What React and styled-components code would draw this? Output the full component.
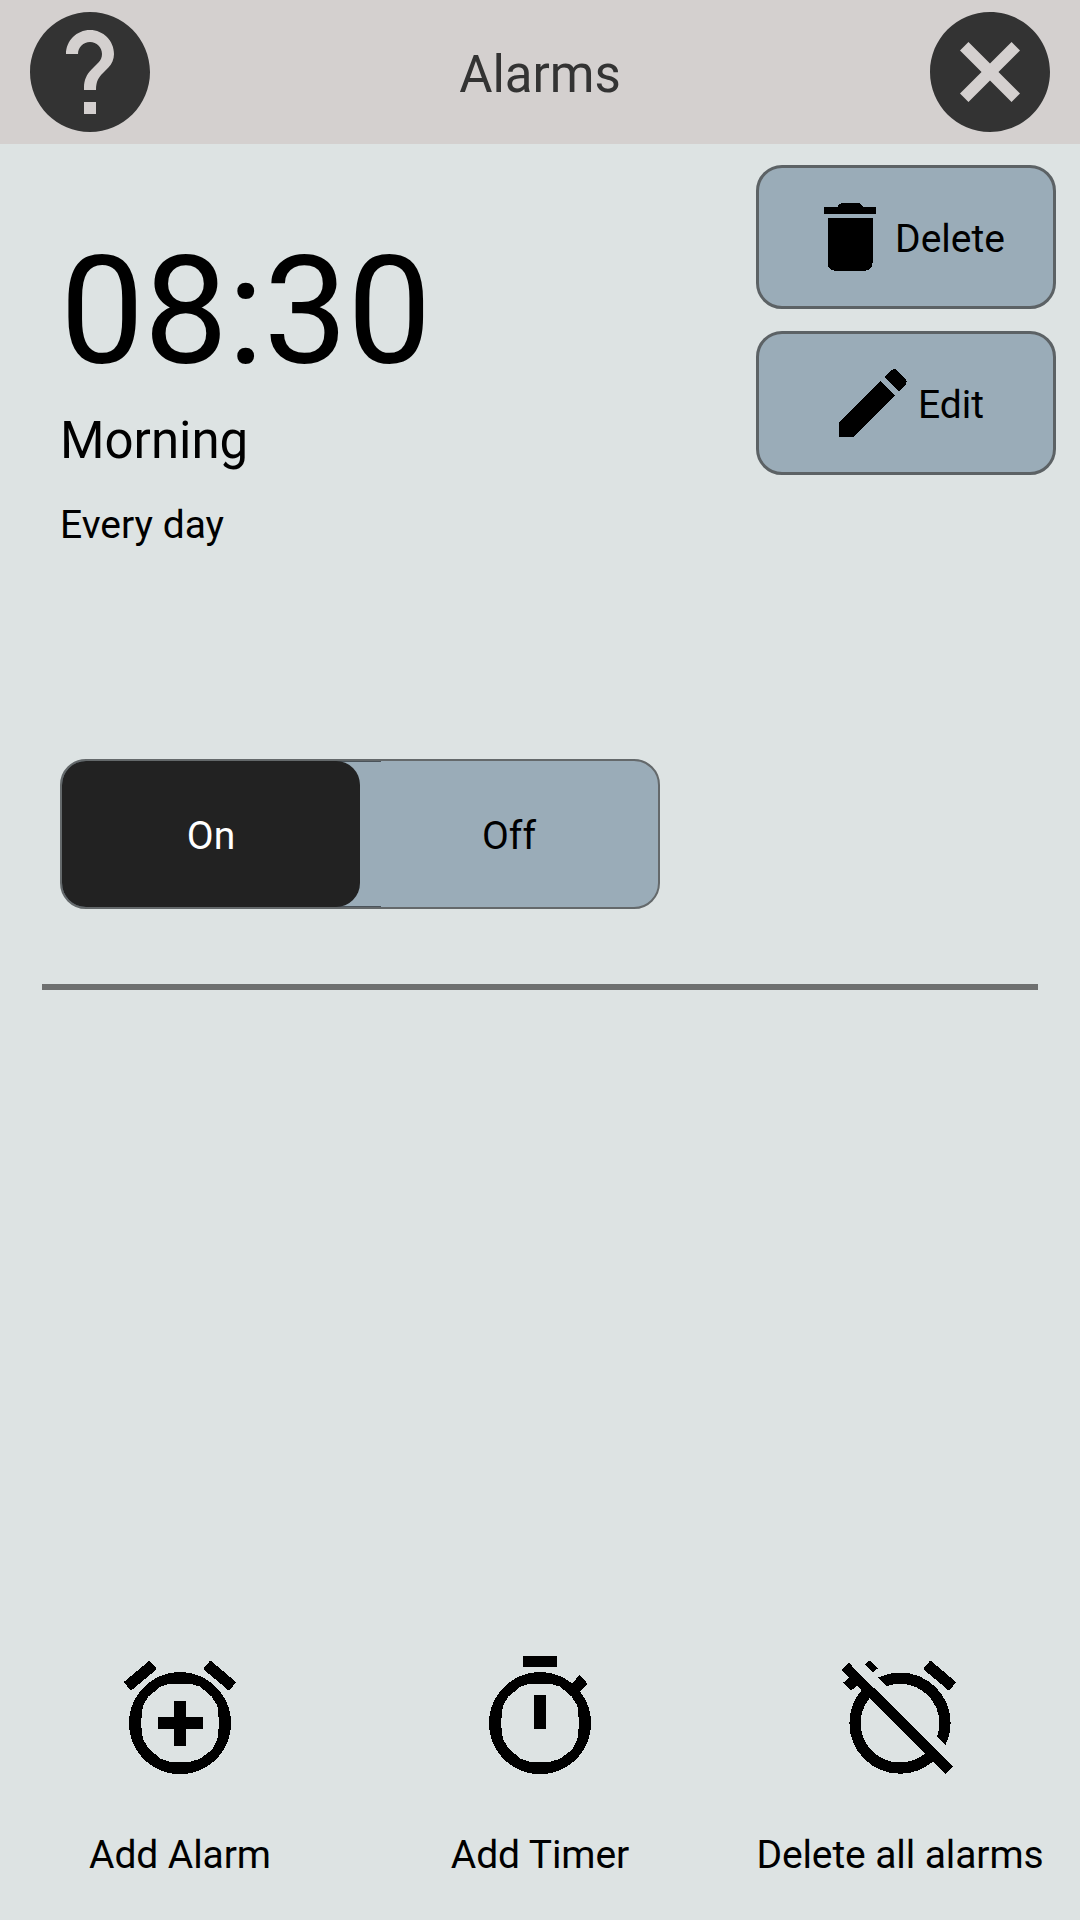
import React from "react";
import styled, { createGlobalStyle } from "styled-components";

const GlobalStyle = createGlobalStyle`
  *, *::before, *::after { box-sizing: border-box; }
  body {
    margin: 0;
    background: #dde3e3;
    font-family: Roboto, "Liberation Sans", sans-serif;
  }
  button {
    margin: 0;
    padding: 0;
    border: 0;
    background: none;
    font: inherit;
    color: inherit;
  }
`;

const Screen = styled.div`
  display: flex;
  flex-direction: column;
  width: 1080px;
  height: 1920px;
  background: #dde3e3;
  color: #000;
  overflow: hidden;
`;

const Header = styled.header`
  display: flex;
  align-items: center;
  justify-content: space-between;
  height: 144px;
  padding: 0 18px;
  background: #d4d0cf;
  color: #333;
`;

const IconButton = styled.button`
  display: flex;
  width: 144px;
  height: 144px;
`;

const Glyph = styled.svg`
  display: block;
  flex: none;
  width: ${(p) => p.$size}px;
  height: ${(p) => p.$size}px;
  fill: currentColor;
  shape-rendering: ${(p) => (p.$crisp ? "crispEdges" : "auto")};
`;

/* Text line with the tall ascent padding used across the app. */
const Line = styled.span`
  display: block;
  margin: 0;
  padding: calc(0.129em + 1px) 0 calc(0.027em - 1px);
  font-size: ${(p) => p.$size}px;
  font-weight: 400;
  line-height: 1.172;
  white-space: nowrap;
`;

const Title = styled(Line)`
  padding: 0.129em 0 0.027em;
`;

const Time = styled(Line)`
  letter-spacing: -0.5px;
`;

const Name = styled(Line)`
  margin-top: -1px;
`;

const Repeat = styled(Line)`
  margin-top: 26px;
`;

const AlarmCard = styled.section`
  display: flex;
  justify-content: space-between;
  height: 615px;
  padding: 0 24px 0 60px;
`;

const Details = styled.div`
  display: flex;
  flex-direction: column;
  align-items: flex-start;
  padding-top: 61px;
`;

const Actions = styled.div`
  display: flex;
  flex-direction: column;
  gap: 22px;
  padding-top: 21px;
`;

const ActionButton = styled.button`
  display: flex;
  align-items: center;
  justify-content: center;
  width: 300px;
  height: 144px;
  padding-right: ${(p) => p.$inset || 0}px;
  border: 3px solid #5c6265;
  border-radius: 26px;
  background: #9aacb8;
`;

const Toggle = styled.div`
  position: relative;
  display: flex;
  width: 600px;
  height: 150px;
  margin-left: 60px;
  border: 2px solid #64696b;
  border-radius: 26px;
  background: #9aacb8;

  &::before {
    content: "";
    position: absolute;
    top: 0;
    left: 270px;
    width: 49px;
    height: 100%;
    border: solid #4a535a;
    border-width: 1px 0;
  }
`;

const ToggleOption = styled.button`
  position: relative;
  display: flex;
  flex: 1;
  align-items: center;
  justify-content: center;
  border-radius: 24px;
  background: ${(p) => (p.$active ? "#222" : "transparent")};
  color: ${(p) => (p.$active ? "#fff" : "#000")};
`;

const Divider = styled.hr`
  width: 996px;
  height: 6px;
  margin: 75px 42px 0;
  border: 0;
  background: #6e7070;
`;

const Footer = styled.nav`
  display: grid;
  grid-template-columns: repeat(3, 360px);
  height: 270px;
  margin-top: auto;
`;

const FooterButton = styled.button`
  display: flex;
  flex-direction: column;
  align-items: center;
  justify-content: flex-start;
  gap: 42px;
  letter-spacing: -0.1px;

  ${Glyph} {
    margin-right: 1px;
  }
`;

const RING =
  "M12 3.93a9.07 9.07 0 1 0 0 18.14a9.07 9.07 0 1 0 0-18.14z" +
  "M10.2 6L13.8 6 15.55 6.5 17.6 8.25 18.65 9.9 18.95 13 18.65 15.9 17.7 17.7 15.55 19.35 13.8 19.85 10.2 19.85 8.55 19.35 6.4 17.5 5.4 15.8 5.05 13 5.4 9.9 6.4 8.25 8.55 6.5z";

const PATHS = {
  help: "M12 2C6.48 2 2 6.48 2 12s4.48 10 10 10 10-4.48 10-10S17.52 2 12 2zm1 17h-2v-2h2v2zm2.07-7.75l-.9.92C13.45 12.9 13 13.5 13 15h-2v-.5c0-1.1.45-2.1 1.17-2.83l1.24-1.26c.37-.36.59-.86.59-1.41 0-1.1-.9-2-2-2s-2 .9-2 2H8c0-2.21 1.79-4 4-4s4 1.79 4 4c0 .88-.36 1.68-.93 2.25z",
  close: "M12 2C6.47 2 2 6.47 2 12s4.47 10 10 10 10-4.47 10-10S17.53 2 12 2zm5 13.59L15.59 17 12 13.41 8.41 17 7 15.59 10.59 12 7 8.41 8.41 7 12 10.59 15.59 7 17 8.41 13.41 12 17 15.59z",
  trash: "M6 19c0 1.1.9 2 2 2h8c1.1 0 2-.9 2-2V7H6v12zM18.8 4h-3.3c-.3-.6-.6-1-1.1-1H9.7c-.6 0-.9.4-1.1 1H5v1.9h13.8V4z",
  pencil: "M3 17.25V21h3.75L17.81 9.94l-3.75-3.75L3 17.25zM20.71 7.04c.39-.39.39-1.02 0-1.41l-2.34-2.34c-.39-.39-1.02-.39-1.41 0l-1.83 1.83 3.75 3.75 1.83-1.83z",
  addAlarm: `M7.88 3.39L6.6 1.86 2 5.71l1.29 1.53 4.59-3.85zM22 5.72l-4.6-3.86-1.29 1.53 4.6 3.86L22 5.72z${RING}M13.1 9h-2.1v2.95H8.1v2.1h2.9v2.95h2.1v-2.95h3v-2.1h-3V9z`,
  timer: `M15.05 1H9v2h6.05V1zM11 14h2.1V7.95H11V14zM19.03 4.5L17.3 6.3l1.4 1.4 1.75-1.73z${RING}`,
  alarmOff: "M12 6c3.87 0 7 3.13 7 7 0 .84-.16 1.65-.43 2.4l1.52 1.52c.58-1.19.91-2.51.91-3.92 0-4.97-4.03-9-9-9-1.41 0-2.73.33-3.92.91L9.6 6.43C10.35 6.16 11.16 6 12 6zm10-.28l-4.6-3.86-1.29 1.53 4.6 3.86L22 5.72zM2.92 2.29L1.65 3.57 2.98 4.9l-1.11.93 1.42 1.42 1.11-.94.8.8C3.83 8.69 3 10.75 3 13c0 4.97 4.02 9 9 9 2.25 0 4.31-.83 5.89-2.2l2.2 2.2 1.27-1.27L3.89 3.27l-.97-.98zm13.55 16.1C15.26 19.39 13.7 20 12 20c-3.87 0-7-3.13-7-7 0-1.7.61-3.26 1.61-4.47l9.86 9.86zM8.02 3.28L6.6 1.86l-.86.71 1.42 1.42.86-.71z",
};

function Icon({ name, size, crisp, viewBox = "0 0 24 24" }) {
  return (
    <Glyph viewBox={viewBox} $size={size} $crisp={crisp} aria-hidden="true">
      <path d={PATHS[name]} />
    </Glyph>
  );
}

const FOOTER_ITEMS = [
  { icon: "addAlarm", label: "Add Alarm" },
  { icon: "timer", label: "Add Timer" },
  { icon: "alarmOff", label: "Delete all alarms" },
];

export default function App() {
  return (
    <Screen>
      <GlobalStyle />
      <Header>
        <IconButton aria-label="Help">
          <Icon name="help" size={144} />
        </IconButton>
        <Title as="h1" $size={51}>Alarms</Title>
        <IconButton aria-label="Close">
          <Icon name="close" size={144} />
        </IconButton>
      </Header>

      <AlarmCard>
        <Details>
          <Time $size={150}>08:30</Time>
          <Name $size={51}>Morning</Name>
          <Repeat $size={39}>Every day</Repeat>
        </Details>
        <Actions>
          <ActionButton $inset={2}>
            <Icon name="trash" size={90} crisp />
            <Line $size={39}>Delete</Line>
          </ActionButton>
          <ActionButton>
            <Icon name="pencil" size={90} crisp />
            <Line $size={39}>Edit</Line>
          </ActionButton>
        </Actions>
      </AlarmCard>

      <Toggle>
        <ToggleOption $active>
          <Line $size={39}>On</Line>
        </ToggleOption>
        <ToggleOption>
          <Line $size={39}>Off</Line>
        </ToggleOption>
      </Toggle>

      <Divider />

      <Footer>
        {FOOTER_ITEMS.map(({ icon, label }) => (
          <FooterButton key={label}>
            <Icon name={icon} size={135} crisp viewBox="-0.09 0 24 24" />
            <Line $size={39}>{label}</Line>
          </FooterButton>
        ))}
      </Footer>
    </Screen>
  );
}
